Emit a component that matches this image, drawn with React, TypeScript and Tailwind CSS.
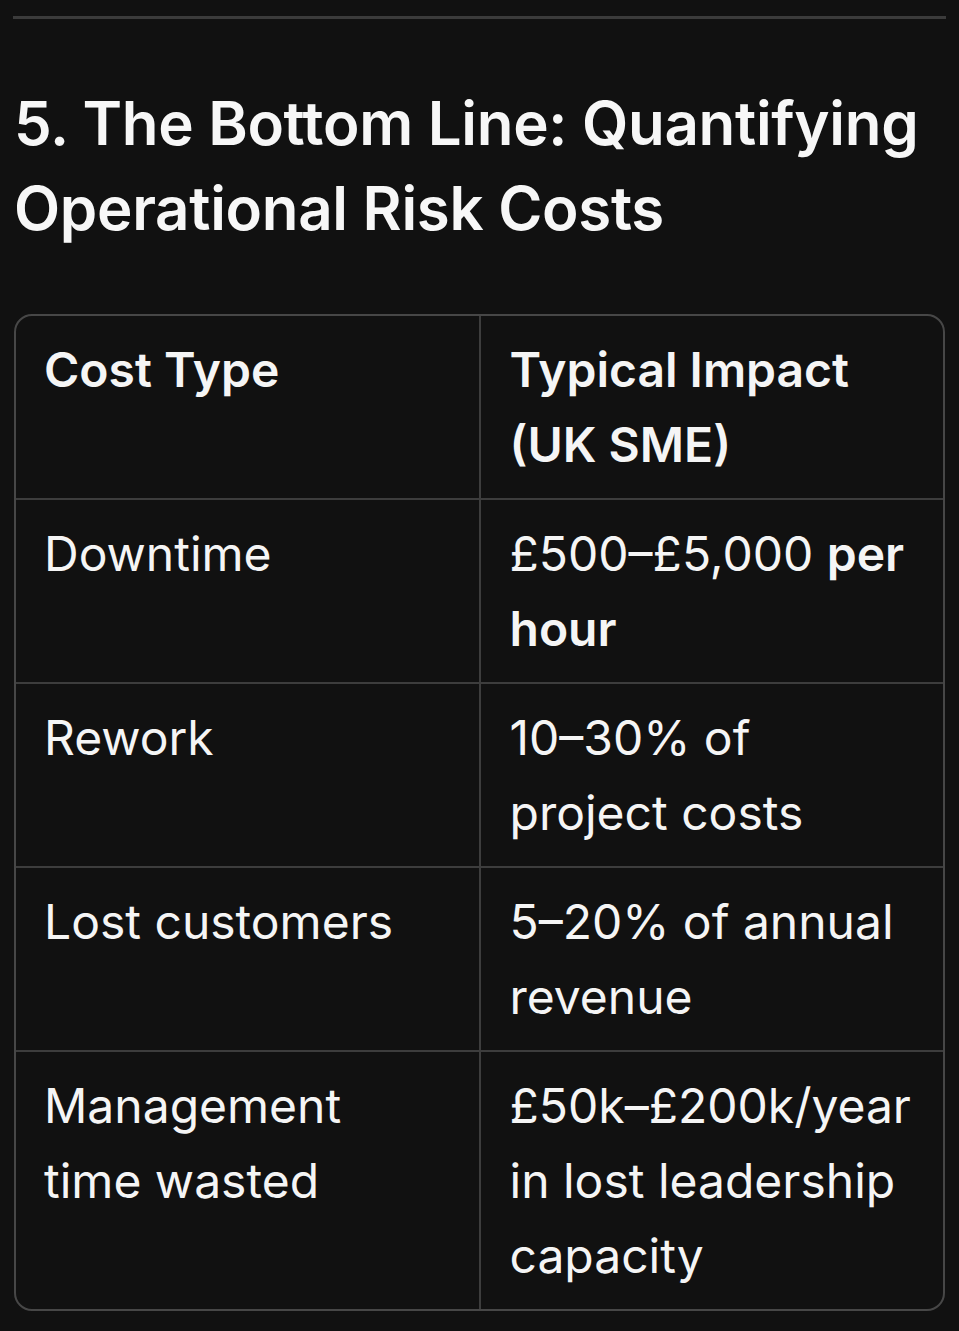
import React from 'react'

type Row = { cost: string; impact: React.ReactNode }

const rows: Row[] = [
  {
    cost: 'Downtime',
    impact: (
      <>
        £500–£5,000 <strong className="font-semibold">per hour</strong>
      </>
    ),
  },
  { cost: 'Rework', impact: '10–30% of project costs' },
  { cost: 'Lost customers', impact: '5–20% of annual revenue' },
  { cost: 'Management time wasted', impact: '£50k–£200k/year in lost leadership capacity' },
]

const App: React.FC = () => {
  return (
    <div
      className="min-h-[1331px] w-full bg-[#111111] text-[#f5f5f5]"
      style={{ fontFamily: 'Inter, "Noto Sans", sans-serif' }}
    >
      <div className="pt-[16px] px-[13px]">
        <div className="h-[3px] bg-[#3b3b3b]" />
      </div>

      <h2 className="mt-[62px] px-[14px] text-[60px] leading-[85px] font-semibold tracking-[-0.3px] text-[#f7f7f7]">
        5. The Bottom Line: Quantifying Operational Risk Costs
      </h2>

      <div className="mx-[14px] mt-[63px] overflow-hidden rounded-[18px] border-2 border-[#474747]">
        <table className="w-full table-fixed border-collapse text-[48px] leading-[75px]">
          <thead>
            <tr className="border-b-2 border-[#3d3d3d]">
              <th className="w-1/2 border-r-2 border-[#3d3d3d] pl-[28px] pr-[40px] pt-[16px] pb-[16px] text-left align-top font-semibold">
                Cost Type
              </th>
              <th className="w-1/2 pl-[29px] pr-[30px] pt-[16px] pb-[16px] text-left align-top font-semibold">
                Typical Impact (UK SME)
              </th>
            </tr>
          </thead>
          <tbody>
            {rows.map((r, i) => (
              <tr key={r.cost} className={i < rows.length - 1 ? 'border-b-2 border-[#3d3d3d]' : ''}>
                <td className="border-r-2 border-[#3d3d3d] pl-[28px] pr-[40px] pt-[16px] pb-[16px] align-top">
                  {r.cost}
                </td>
                <td className="pl-[29px] pr-[30px] pt-[16px] pb-[16px] align-top">{r.impact}</td>
              </tr>
            ))}
          </tbody>
        </table>
      </div>
    </div>
  )
}

export default App
